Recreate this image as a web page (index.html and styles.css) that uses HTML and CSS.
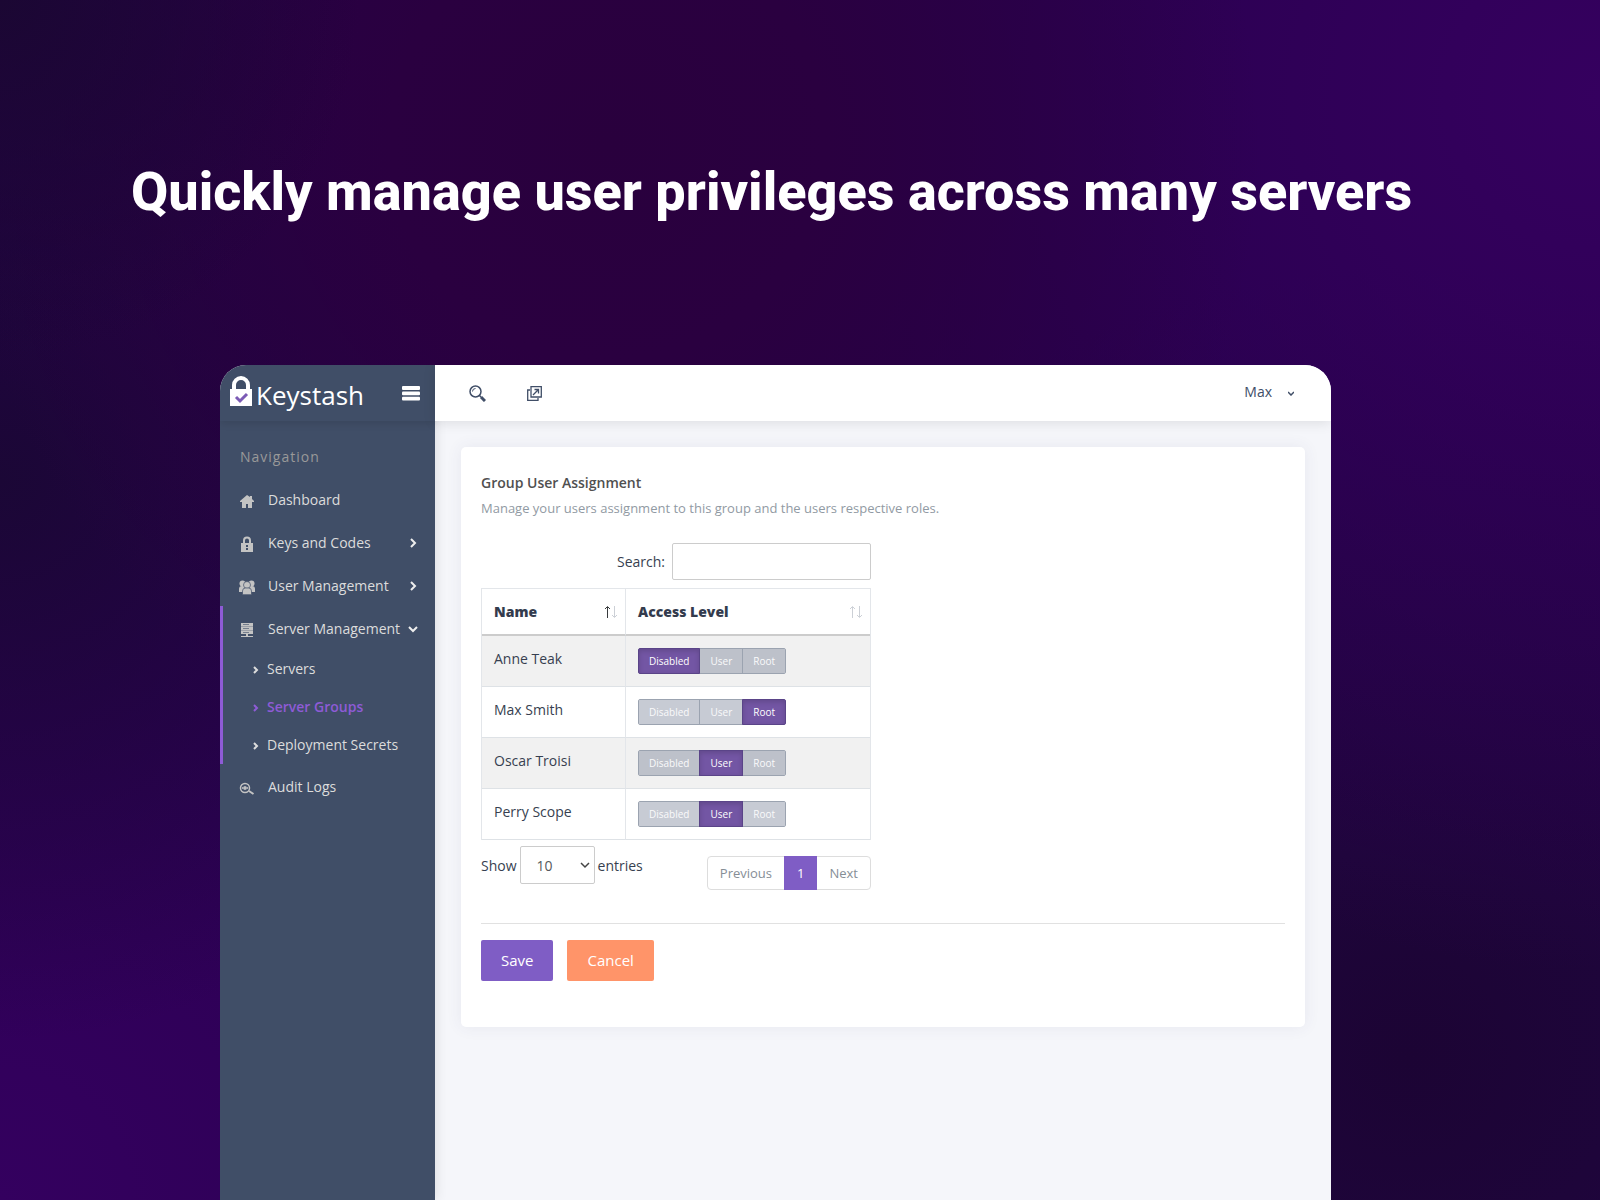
FILE: index.html
```html
<!DOCTYPE html>
<html lang="en">

<head>
    <meta charset="utf-8">
    <title>Keystash - Group User Assignment</title>
    <link rel="stylesheet" href="styles.css">
</head>

<body>
    <h1>Quickly manage user privileges across many servers</h1>

    <div class="app">
        <aside class="sidebar">
            <div class="brand">
                <a href="#" class="logo">
                    <svg width="22" height="30" viewBox="0 0 22 30">
                        <path d="M4 14V9a7 7 0 0 1 14 0v5" fill="none" stroke="#fff" stroke-width="4" />
                        <path d="M0 13h22v17H0z" fill="#fff" />
                        <path d="M6 21l4 4 7-7" fill="none" stroke="#7c5bb5" stroke-width="3" />
                    </svg>
                    <span>Keystash</span>
                </a>
                <button class="icon-btn" aria-label="Toggle menu">
                    <svg width="18" height="16" viewBox="0 0 18 16" fill="#fff">
                        <rect y="1" width="18" height="4" rx="1" />
                        <rect y="6.500" width="18" height="3.800" rx="1" />
                        <rect y="11.700" width="18" height="3.800" rx="1" />
                    </svg>
                </button>
            </div>

            <nav>
                <p class="nav-title">Navigation</p>
                <a href="#" class="nav-item">
                    <svg class="nav-icon" viewBox="0 0 16 16">
                        <path d="M8 2L1 8v1h2v6h4v-4h2v4h4V9h2V8l-2-2V3h-2v1z" />
                    </svg>
                    Dashboard
                </a>
                <a href="#" class="nav-item">
                    <svg class="nav-icon" viewBox="0 0 16 16">
                        <path d="M5 8V4.500a3 3 0 0 1 6 0V8" fill="none" stroke="#c3c3c3" stroke-width="2" />
                        <path d="M2 7h12v9H2z" />
                        <path d="M7 9h2v2H7zM7 12h2v2H7z" fill="#404e67" />
                    </svg>
                    Keys and Codes
                    <svg class="chevron" viewBox="0 0 8 8"><path d="M2 0l4 4-4 4" /></svg>
                </a>
                <a href="#" class="nav-item">
                    <svg class="nav-icon" viewBox="0 0 16 16">
                        <circle cx="3.500" cy="4.500" r="3" />
                        <circle cx="12.500" cy="4.500" r="3" />
                        <path d="M0 13v-3q0-3 3-3h10q3 0 3 3v3z" />
                        <g stroke="#404e67" stroke-width=".7">
                            <circle cx="8" cy="6" r="3.500" />
                            <path d="M3.500 15.700V12q0-3 3-3h3q3 0 3 3v3.700z" />
                        </g>
                    </svg>
                    User Management
                    <svg class="chevron" viewBox="0 0 8 8"><path d="M2 0l4 4-4 4" /></svg>
                </a>
                <div class="nav-group">
                    <a href="#" class="nav-item">
                        <svg class="nav-icon" viewBox="0 0 16 16">
                            <path d="M2 1h12v11H2zM7 12h2v2h5v1H2v-1h5z" />
                            <path d="M4 2h6v1H4zM4 6h6v1H4zM4 10h6v1H4zM2 4h12v.6H2zM2 8h12v.6H2z" fill="#404e67" opacity=".6" />
                        </svg>
                        Server Management
                        <svg class="chevron" viewBox="0 0 8 8"><path d="M0 2l4 4 4-4" /></svg>
                    </a>
                    <div class="subnav">
                        <a href="#"><svg viewBox="0 0 6 8"><path d="M1 1l3 3-3 3" /></svg>Servers</a>
                        <a href="#" class="current"><svg viewBox="0 0 6 8"><path d="M1 1l3 3-3 3" /></svg>Server Groups</a>
                        <a href="#"><svg viewBox="0 0 6 8"><path d="M1 1l3 3-3 3" /></svg>Deployment Secrets</a>
                    </div>
                </div>
                <a href="#" class="nav-item">
                    <svg class="nav-icon" viewBox="0 0 16 16">
                        <g fill="none" stroke="#c3c3c3">
                            <circle cx="6" cy="8" r="4.500" stroke-width="1.500" />
                            <path d="M10 11l4.500 3" stroke-width="2" />
                            <path d="M3 8q3-3 6 0-3 3-6 0z" />
                        </g>
                        <circle cx="6" cy="8" r="1.200" />
                    </svg>
                    Audit Logs
                </a>
            </nav>
        </aside>

        <div class="main">
            <header class="topbar">
                <button class="icon-btn" aria-label="Search">
                    <svg width="17" height="17" viewBox="0 0 17 17" fill="none" stroke="#404e67">
                        <circle cx="6.500" cy="6.500" r="5.500" stroke-width="1.500" />
                        <path d="M3.500 6.500a3 3 0 0 1 3-3" />
                        <path d="M10.500 10.500l1.500 1.500" stroke-width="1.500" />
                        <path d="M12 12l4 4" stroke-width="3" />
                    </svg>
                </button>
                <button class="icon-btn" aria-label="Open in new window">
                    <svg width="15" height="15" viewBox="0 0 15 15" fill="none" stroke="#404e67">
                        <path d="M4 .7h10.300V11H4z" stroke-width="1.300" />
                        <path d="M3 4H.7v10.300H11V12" stroke-width="1.300" />
                        <path d="M6 9l5-5M7.500 3.500h4v4" stroke-width="1.300" />
                    </svg>
                </button>
                <button class="user-menu">
                    Max
                    <svg width="6" height="6" viewBox="0 0 6 6" fill="none" stroke="#404e67" stroke-width="1.500"><path d="M0 2l3 3 3-3" /></svg>
                </button>
            </header>

            <main class="card">
                <h2>Group User Assignment</h2>
                <p class="subtitle">Manage your users assignment to this group and the users respective roles.</p>

                <div class="datatable">
                    <div class="search">
                        <label for="search">Search:</label>
                        <input type="search" id="search">
                    </div>

                    <table>
                        <thead>
                            <tr>
                                <th class="name-col">
                                    <div class="sort">Name
                                        <svg width="13" height="12" viewBox="0 0 13 12" fill="none">
                                            <path d="M3.500 12V1M1 3l2.500-2.500L6 3" stroke="#373a3c" />
                                            <path d="M10.500 0v11M8 9l2.500 2.500L13 9" stroke="#ccd0d6" />
                                        </svg>
                                    </div>
                                </th>
                                <th>
                                    <div class="sort">Access Level
                                        <svg width="13" height="12" viewBox="0 0 13 12" fill="none" stroke="#ccd0d6">
                                            <path d="M3.500 12V1M1 3l2.500-2.500L6 3" />
                                            <path d="M10.500 0v11M8 9l2.500 2.500L13 9" />
                                        </svg>
                                    </div>
                                </th>
                            </tr>
                        </thead>
                        <tbody>
                            <tr>
                                <td>Anne Teak</td>
                                <td>
                                    <div class="levels">
                                        <button class="on">Disabled</button><button>User</button><button>Root</button>
                                    </div>
                                </td>
                            </tr>
                            <tr>
                                <td>Max Smith</td>
                                <td>
                                    <div class="levels">
                                        <button>Disabled</button><button>User</button><button class="on">Root</button>
                                    </div>
                                </td>
                            </tr>
                            <tr>
                                <td>Oscar Troisi</td>
                                <td>
                                    <div class="levels">
                                        <button>Disabled</button><button class="on">User</button><button>Root</button>
                                    </div>
                                </td>
                            </tr>
                            <tr>
                                <td>Perry Scope</td>
                                <td>
                                    <div class="levels">
                                        <button>Disabled</button><button class="on">User</button><button>Root</button>
                                    </div>
                                </td>
                            </tr>
                        </tbody>
                    </table>

                    <div class="table-footer">
                        <label class="length">Show
                            <span class="select">
                                <select>
                                    <option>10</option>
                                    <option>25</option>
                                    <option>50</option>
                                    <option>100</option>
                                </select>
                                <svg width="10" height="7" viewBox="0 0 10 7"><path d="M1 1l4 4 4-4" /></svg>
                            </span>
                            entries
                        </label>
                        <div class="pagination">
                            <a href="#">Previous</a>
                            <a href="#" class="page">1</a>
                            <a href="#">Next</a>
                        </div>
                    </div>
                </div>

                <hr>
                <div class="actions">
                    <button class="save">Save</button>
                    <button class="cancel">Cancel</button>
                </div>
            </main>
        </div>
    </div>

    <script>
        // clicking a level makes it the selected one in its row
        document.querySelectorAll('.levels button').forEach(function (button) {
            button.addEventListener('click', function () {
                button.parentNode.querySelector('.on').classList.remove('on');
                button.classList.add('on');
            });
        });
    </script>
</body>

</html>
```

FILE: styles.css
```css
* {
    box-sizing: border-box;
}

body {
    margin: 0;
    min-height: 100vh;
    display: flex;
    flex-direction: column;
    font-family: "Open Sans", sans-serif;
    font-size: 14px;
    line-height: 21px;
    color: #373f50;
    background:
        radial-gradient(circle at 0% 0%, #1b0733 0%, transparent 18%),
        radial-gradient(circle at 38% 12%, #29003d 0%, #2a0040 15%, transparent 45%),
        radial-gradient(circle at 0% 40%, #1b0736 0%, transparent 32%),
        radial-gradient(circle at 0% 100%, #34005f 0%, transparent 50%),
        radial-gradient(circle at 100% 8%, #35005f 0%, transparent 45%),
        radial-gradient(circle at 88% 88%, #1c0434 0%, #1e053a 12%, transparent 45%),
        #240048;
}

h1 {
    margin: 159px 131px 140px;
    font-family: Roboto, sans-serif;
    font-size: 54px;
    font-weight: 800;
    line-height: 66px;
    white-space: nowrap;
    color: #fff;
}

a {
    color: inherit;
    text-decoration: none;
}

button {
    font-family: inherit;
    cursor: pointer;
}

.app {
    flex: 1;
    display: flex;
    margin: 0 269px 0 220px;
    border-radius: 26px 26px 0 0;
    overflow: hidden;
    background: #f5f6fa;
}

/* sidebar */
.sidebar {
    width: 215px;
    flex-shrink: 0;
    background: #404e67;
    color: #dcdcdc;
    box-shadow: 0 0 12px rgba(0, 0, 0, 0.12);
}

.brand {
    height: 56px;
    padding: 0 15px 0 10px;
    display: flex;
    align-items: center;
    justify-content: space-between;
    box-shadow: 0 2px 8px rgba(0, 0, 0, 0.12);
}

.logo {
    display: flex;
    align-items: center;
    gap: 4px;
    padding-bottom: 4px;
    color: #fff;
}

.logo span {
    padding-top: 8px;
    font-size: 26px;
    line-height: 30px;
}

.icon-btn {
    display: flex;
    padding: 0;
    border: 0;
    background: none;
}

.nav-title {
    margin: 0;
    padding: 25px 20px 10px;
    letter-spacing: 1px;
    color: #999;
}

.nav-item {
    display: flex;
    align-items: center;
    height: 43px;
    padding: 2px 18px 0 19px;
}

.nav-icon {
    width: 16px;
    height: 16px;
    margin: 3px 13px 0 0;
    fill: #c3c3c3;
}

.chevron {
    width: 8px;
    height: 8px;
    margin-left: auto;
    overflow: visible;
    fill: none;
    stroke: #eee;
    stroke-width: 2;
}

.nav-group {
    box-shadow: inset 3px 0 #8e5bd6;
}

.subnav {
    padding-bottom: 1px;
}

.subnav a {
    display: flex;
    align-items: center;
    height: 38px;
    padding: 1px 0 0 33px;
}

.subnav svg {
    width: 6px;
    height: 8px;
    margin: 2px 8px 0 0;
    fill: none;
    stroke: currentColor;
    stroke-width: 2;
}

.subnav .current {
    color: #8e5bd6;
    font-weight: 600;
}

/* top bar */
.main {
    flex: 1;
}

.topbar {
    height: 56px;
    padding: 0 37px 0 34px;
    display: flex;
    align-items: center;
    gap: 41px;
    background: #fff;
    box-shadow: 0 2px 12px rgba(0, 0, 0, 0.1);
}

.user-menu {
    display: flex;
    align-items: center;
    gap: 16px;
    margin-left: auto;
    padding: 0 0 4px;
    border: 0;
    background: none;
    font-size: 14px;
    line-height: 21px;
    color: #404e67;
}

.user-menu svg {
    margin-top: 4px;
}

/* card */
.card {
    margin: 26px;
    padding: 25px 20px 46px;
    border-radius: 5px;
    background: #fff;
    box-shadow: 0 0 16px rgba(60, 60, 110, 0.08);
}

h2 {
    margin: 0;
    font-size: 14px;
    line-height: 21px;
    font-weight: 600;
    color: #505050;
}

.subtitle {
    margin: 5px 0 24px;
    font-size: 13px;
    color: #919aa3;
}

.datatable {
    width: 390px;
}

.search {
    display: flex;
    align-items: center;
    justify-content: flex-end;
    gap: 7px;
    margin-bottom: 8px;
}

.search input {
    width: 199px;
    height: 37px;
    padding: 0 10px;
    border: 1px solid #ccc;
    border-radius: 2px;
    font: inherit;
}

table {
    width: 100%;
    border-collapse: separate;
    border-spacing: 0;
    border: 1px solid #e3e6ea;
    border-bottom: 0;
}

th {
    height: 47px;
    padding: 0 8px 0 12px;
    border-bottom: 2px solid #ccc;
    text-align: left;
    font-weight: 800;
    color: #333b4d;
}

.name-col {
    width: 143px;
}

th + th,
td + td {
    border-left: 1px solid #e3e6ea;
}

.sort {
    display: flex;
    align-items: center;
    justify-content: space-between;
}

td {
    padding: 12px;
    border-bottom: 1px solid #dee2e6;
    vertical-align: top;
}

tbody tr:nth-child(odd) {
    background: #f1f1f1;
}

.levels {
    display: flex;
}

.levels button {
    height: 26px;
    padding: 1px 10px 0;
    border: 1px solid #9ba3b0;
    background: rgba(68, 82, 112, 0.3);
    background-clip: padding-box;
    font-size: 10px;
    line-height: 23px;
    color: #fafafb;
}

.levels button + button {
    margin-left: -1px;
}

.levels button:first-child {
    border-radius: 2px 0 0 2px;
}

.levels button:last-child {
    border-radius: 0 2px 2px 0;
}

.levels .on {
    position: relative;
    border-color: #5a4488;
    background: #7356a4;
    box-shadow: inset 0 2px 5px rgba(0, 0, 0, 0.15);
    color: #fff;
}

.table-footer {
    display: flex;
    justify-content: space-between;
    padding-top: 6px;
}

.length {
    display: flex;
    align-items: center;
    gap: 3px;
    height: 38px;
}

.select {
    position: relative;
}

.select select {
    display: block;
    width: 75px;
    height: 38px;
    padding: 0 16px;
    border: 1px solid #ccc;
    border-radius: 2px;
    appearance: none;
    background: #fff;
    font: inherit;
    color: #55595c;
}

.select svg {
    position: absolute;
    right: 5px;
    top: 16px;
    fill: none;
    stroke: #444;
    stroke-width: 1.5;
    pointer-events: none;
}

.pagination {
    display: flex;
    height: 34px;
    margin-top: 10px;
    border: 1px solid #ddd;
    border-radius: 4px;
    font-size: 13px;
    line-height: 32px;
    color: #868e96;
}

.pagination a {
    padding: 0 12px;
}

.pagination .page {
    margin: -1px 0;
    padding: 1px 13px;
    background: #7f5dc5;
    color: #fff;
}

hr {
    margin: 33px 0 16px;
    border: 0;
    border-top: 1px solid #e1e1e1;
}

.actions {
    display: flex;
    gap: 14px;
}

.actions button {
    padding: 10px 20px;
    border: 0;
    border-radius: 2px;
    font-size: 15px;
    line-height: 21px;
    color: #fff;
}

.save {
    background: #7f5dc5;
}

.cancel {
    background: #ff9469;
}
```
